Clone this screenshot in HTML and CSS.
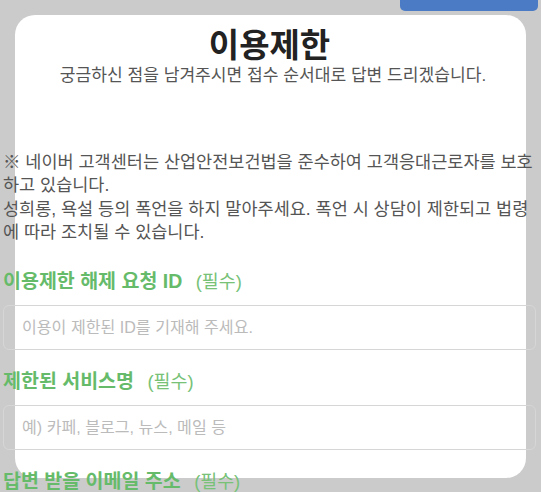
FILE: index.html
```html
<!DOCTYPE html>
<html lang="ko">
<head>
    <meta charset="UTF-8">
    <meta name="viewport" content="width=device-width, initial-scale=1.0">
    <title>이용제한</title>
    <link rel="stylesheet" href="styles.css">
</head>
<body>
    <button class="top-btn">문의 내역 확인</button>

    <div class="modal">
        <div class="modal-inner">
            <h1 class="title">이용제한</h1>
            <p class="subtitle">궁금하신 점을 남겨주시면 접수 순서대로 답변 드리겠습니다.</p>

            <p class="notice">
                ※ 네이버 고객센터는 산업안전보건법을 준수하여 고객응대근로자를 보호하고 있습니다.<br>
                성희롱, 욕설 등의 폭언을 하지 말아주세요. 폭언 시 상담이 제한되고 법령에 따라 조치될 수 있습니다.
            </p>

            <div class="field">
                <label class="field-label" for="userId">이용제한 해제 요청 ID <span class="required">(필수)</span></label>
                <input type="text" id="userId" class="field-input" placeholder="이용이 제한된 ID를 기재해 주세요.">
            </div>

            <div class="field">
                <label class="field-label" for="service">제한된 서비스명 <span class="required">(필수)</span></label>
                <input type="text" id="service" class="field-input" placeholder="예) 카페, 블로그, 뉴스, 메일 등">
            </div>

            <div class="field">
                <label class="field-label" for="email">답변 받을 이메일 주소 <span class="required">(필수)</span></label>
                <input type="text" id="email" class="field-input" placeholder="이메일 주소를 입력해 주세요.">
            </div>
        </div>
    </div>
</body>
</html>
```

FILE: styles.css
```css
html, body {
    height: 100%;
    overflow: hidden;
}
body {
    margin: 0;
    background-color: #cbcbcb;
    font-family: "Liberation Sans", "Noto Sans CJK KR", sans-serif;
    color: #333;
    position: relative;
}
.top-btn {
    position: absolute;
    top: -32px;
    right: 3px;
    width: 138px;
    height: 43px;
    padding: 0 0 12px 0;
    border: none;
    border-radius: 5px;
    background-color: #4a7bc4;
    color: #fff;
    font-family: inherit;
    font-size: 14px;
    line-height: 14px;
    display: flex;
    align-items: flex-end;
    justify-content: center;
}
.modal {
    margin: 15px 15px 0 15px;
    height: 463px;
    background-color: #fff;
    border-radius: 20px;
}
.modal-inner {
    margin: 0 -10px 0 -12px;
    padding-top: 11px;
}
.title {
    margin: 0;
    text-align: center;
    font-size: 33px;
    font-weight: bold;
    line-height: 40px;
    color: #222;
}
.subtitle {
    margin: -1px 0 0 0;
    padding-left: 7px;
    text-align: center;
    font-size: 17.1px;
    line-height: 22px;
    color: #555;
}
.notice {
    margin: 64px 0 0 0;
    font-size: 17.5px;
    line-height: 23.4px;
    color: #555;
}
.field {
    margin-top: 24px;
}
.field + .field {
    margin-top: 19px;
}
.field-label {
    display: block;
    font-size: 19.5px;
    font-weight: bold;
    line-height: 24px;
    color: #66bb6a;
}
.required {
    margin-left: 8px;
    font-size: 18.4px;
    font-weight: normal;
    color: #77c277;
}
.field-input {
    display: block;
    box-sizing: border-box;
    width: 100%;
    height: 45px;
    margin-top: 11px;
    padding: 0 18px;
    border: 1px solid #d6d6d6;
    border-radius: 6px;
    background: transparent;
    font-family: inherit;
    font-size: 16.1px;
}
.field-input::placeholder {
    color: #bbb;
}
```
